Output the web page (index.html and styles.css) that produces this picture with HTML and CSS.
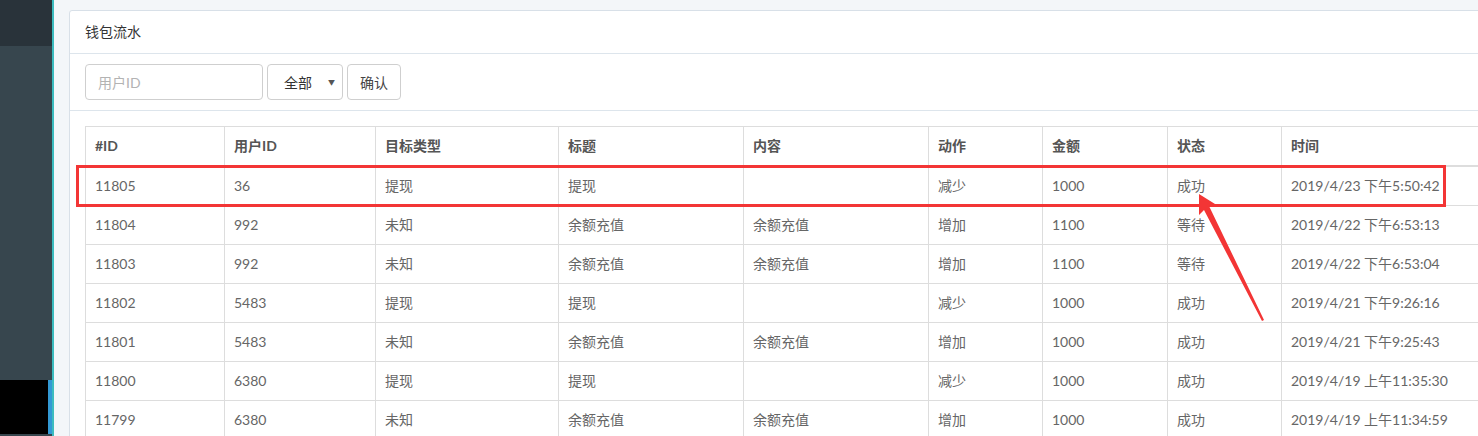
FILE: index.html
```html
<!DOCTYPE html>
<html lang="zh">
<head>
<meta charset="utf-8">
<title>钱包流水</title>
<link rel="stylesheet" href="styles.css">
</head>
<body>
<div class="app">
  <aside class="sidebar">
    <div class="sb-top"></div>
    <div class="sb-mid"></div>
    <div class="sb-bottom"></div>
    <div class="sb-foot"></div>
  </aside>
  <main class="main">
    <section class="card">
      <div class="card-header">钱包流水</div>
      <div class="filter">
        <input class="input" type="text" placeholder="用户ID">
        <div class="select"><span>全部</span><span class="caret">▼</span></div>
        <button class="btn" type="button">确认</button>
      </div>
      <div class="table-wrap">
        <table class="table">
          <colgroup>
            <col class="c1"><col class="c2"><col class="c3"><col class="c4"><col class="c5"><col class="c6"><col class="c7"><col class="c8"><col class="c9">
          </colgroup>
          <thead>
            <tr><th>#ID</th><th>用户ID</th><th>目标类型</th><th>标题</th><th>内容</th><th>动作</th><th>金额</th><th>状态</th><th>时间</th></tr>
          </thead>
          <tbody>
            <tr><td>11805</td><td>36</td><td>提现</td><td>提现</td><td></td><td>减少</td><td>1000</td><td>成功</td><td>2019/4/23 下午5:50:42</td></tr>
            <tr><td>11804</td><td>992</td><td>未知</td><td>余额充值</td><td>余额充值</td><td>增加</td><td>1100</td><td>等待</td><td>2019/4/22 下午6:53:13</td></tr>
            <tr><td>11803</td><td>992</td><td>未知</td><td>余额充值</td><td>余额充值</td><td>增加</td><td>1100</td><td>等待</td><td>2019/4/22 下午6:53:04</td></tr>
            <tr><td>11802</td><td>5483</td><td>提现</td><td>提现</td><td></td><td>减少</td><td>1000</td><td>成功</td><td>2019/4/21 下午9:26:16</td></tr>
            <tr><td>11801</td><td>5483</td><td>未知</td><td>余额充值</td><td>余额充值</td><td>增加</td><td>1000</td><td>成功</td><td>2019/4/21 下午9:25:43</td></tr>
            <tr><td>11800</td><td>6380</td><td>提现</td><td>提现</td><td></td><td>减少</td><td>1000</td><td>成功</td><td>2019/4/19 上午11:35:30</td></tr>
            <tr><td>11799</td><td>6380</td><td>未知</td><td>余额充值</td><td>余额充值</td><td>增加</td><td>1000</td><td>成功</td><td>2019/4/19 上午11:34:59</td></tr>
          </tbody>
        </table>
      </div>
    </section>
  </main>
</div>
<div class="highlight"></div>
<svg class="arrow" width="1478" height="436" viewBox="0 0 1478 436" xmlns="http://www.w3.org/2000/svg">
  <polygon points="1199,194 1215,204 1209,206 1264,320 1262,321 1204,210 1199,215" fill="#f33535"/>
</svg>
</body>
</html>
```
FILE: styles.css
```css
html, body {
  margin: 0;
  padding: 0;
  width: 1478px;
  height: 436px;
  overflow: hidden;
  font-family: "Lato", "Noto Sans CJK SC", sans-serif;
  font-size: 14px;
  color: #333;
}

.app {
  display: flex;
  height: 436px;
}

.sidebar {
  width: 52px;
  flex: none;
  display: flex;
  flex-direction: column;
  border-right: 2px solid #3cbcbf;
}

.sb-top {
  height: 46px;
  background: #29333a;
}

.sb-mid {
  flex: 1;
  background: #37464e;
}

.sb-bottom {
  height: 54px;
  background: #000;
  border-right: 4px solid #3399d4;
}

.sb-foot {
  height: 2px;
  background: #37464e;
}

.main {
  flex: 1;
  min-width: 0;
  overflow: hidden;
  background: #f3f6f9;
  padding: 10px 0 0 15px;
}

.card {
  width: 1520px;
  background: #fff;
  border: 1px solid #d8e0e8;
  border-radius: 3px;
  height: 460px;
}

.card-header {
  height: 42px;
  line-height: 42px;
  padding: 0 15px;
  border-bottom: 1px solid #dde5ec;
  color: #333;
  font-size: 14px;
}

.filter {
  display: flex;
  gap: 4px;
  padding: 10px 15px;
  border-bottom: 1px solid #dde5ec;
}

.input {
  box-sizing: border-box;
  width: 178px;
  height: 36px;
  border: 1px solid #cfcfcf;
  border-radius: 4px;
  padding: 0 12px;
  font-family: inherit;
  font-size: 14px;
  color: #555;
  outline: none;
}

.input::placeholder {
  color: #b3b3b3;
}

.select {
  box-sizing: border-box;
  width: 76px;
  height: 36px;
  border: 1px solid #cfcfcf;
  border-radius: 4px;
  display: flex;
  align-items: center;
  justify-content: space-between;
  padding: 0 7px 0 16px;
  color: #333;
}

.caret {
  font-size: 7px;
  color: #555;
}

.btn {
  box-sizing: border-box;
  width: 54px;
  height: 36px;
  border: 1px solid #cfcfcf;
  border-radius: 4px;
  background: #fff;
  font-family: inherit;
  font-size: 14px;
  color: #444;
  padding: 0;
}

.table-wrap {
  padding: 15px 15px 0;
}

.table {
  table-layout: fixed;
  border-collapse: collapse;
  width: 1500px;
}

.c1 { width: 139px; }
.c2 { width: 151px; }
.c3 { width: 183px; }
.c4 { width: 185px; }
.c5 { width: 185px; }
.c6 { width: 114px; }
.c7 { width: 125px; }
.c8 { width: 114px; }
.c9 { width: 304px; }

.table th,
.table td {
  border: 1px solid #dddddd;
  padding: 8px 9px;
  line-height: 22px;
  text-align: left;
  white-space: nowrap;
}

.table th {
  font-weight: bold;
  color: #555;
  border-bottom: 2px solid #dddddd;
  padding-top: 8px;
  padding-bottom: 8px;
}

.table td {
  color: #666;
}

.highlight {
  position: absolute;
  left: 76px;
  top: 165px;
  width: 1364px;
  height: 36px;
  border: 3px solid #f33535;
  pointer-events: none;
}

.arrow {
  position: absolute;
  left: 0;
  top: 0;
  pointer-events: none;
}
```
